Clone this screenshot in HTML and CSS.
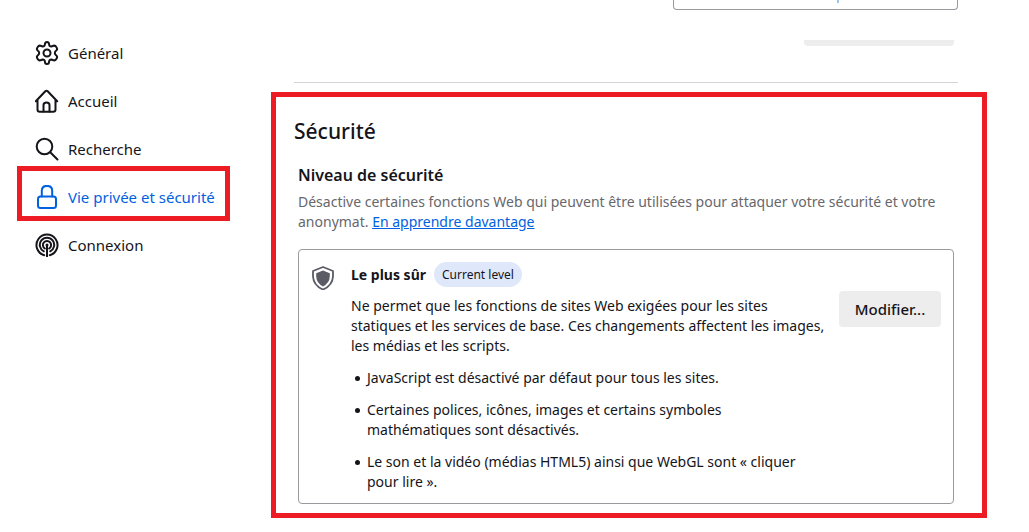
FILE: index.html
```html
<!DOCTYPE html>
<html lang="fr">
<head>
    <meta charset="UTF-8">
    <meta name="viewport" content="width=device-width, initial-scale=1.0">
    <title>Paramètres</title>
    <link rel="stylesheet" href="styles.css">
</head>
<body>

    <div class="page">
        <nav class="sidebar">
            <a class="category" href="#general">
                <svg class="icon" viewBox="0 0 24 24">
                    <path d="M9.900 3.500Q9.900 1 12 1Q14.100 1 14.100 3.500Q14.300 5.500 16.300 5.500L18.500 4.700Q20.300 4.300 21.300 6Q22.900 8.300 21.300 9.500Q19.800 10.600 19.800 12Q19.800 13.400 21.300 14.500Q22.900 15.700 21.300 18Q20.300 19.700 18.500 19.300L16.300 18.500Q14.300 18.500 14.100 20.500Q14.100 23 12 23Q9.900 23 9.900 20.500Q9.700 18.500 7.700 18.500L5.500 19.300Q3.700 19.700 2.700 18Q1.100 15.700 2.700 14.500Q4.200 13.400 4.200 12Q4.200 10.600 2.700 9.500Q1.100 8.300 2.700 6Q3.700 4.300 5.500 4.700L7.700 5.500Q9.700 5.500 9.900 3.500Z"/>
                    <circle cx="12" cy="12" r="3.500"/>
                </svg>
                <span>Général</span>
            </a>
            <a class="category" href="#accueil">
                <svg class="icon" viewBox="0 0 24 24">
                    <path d="M.8 12.300L10.300 2.300Q11.500 1.200 12.700 2.300L22.200 12.300M2.500 10.800V20.500Q2.500 22.800 4.800 22.800H18.200Q20.500 22.800 20.500 20.500V10.800"/>
                    <path d="M8.500 22.500V16Q8.500 13.500 11.500 13.500Q14.500 13.500 14.500 16V22.500"/>
                </svg>
                <span>Accueil</span>
            </a>
            <a class="category" href="#recherche">
                <svg class="icon" viewBox="0 0 24 24">
                    <circle cx="9.500" cy="9.500" r="7.800"/>
                    <path d="M15.200 15.200L22.500 22.500"/>
                </svg>
                <span>Recherche</span>
            </a>
            <a class="category selected" href="#vie-privee">
                <svg class="icon" viewBox="0 0 24 24">
                    <rect x="3" y="11.500" width="18" height="11.500" rx="2.500"/>
                    <path d="M6.800 11.500V5.800Q6.800 .9 12 .9Q17.200 .9 17.200 5.800V11.500"/>
                </svg>
                <span>Vie privée et sécurité</span>
            </a>
            <a class="category" href="#connexion">
                <svg class="icon" viewBox="0 0 24 24">
                    <path d="M9.200 22.200A10.500 10.500 0 1 1 14.800 22.200M8.800 18.300A7.200 7.200 0 1 1 15.200 18.300M9.800 15.500A4.100 4.100 0 1 1 14.200 15.500M12 13V23.500"/>
                    <circle class="filled" cx="12" cy="12" r="1.500"/>
                </svg>
                <span>Connexion</span>
            </a>
        </nav>

        <main class="content">
            <div class="previous">
                <div class="previous-box"><span class="previous-mark"></span></div>
                <div class="previous-button"></div>
            </div>

            <section class="security">
                <h1>Sécurité</h1>
                <h2>Niveau de sécurité</h2>
                <p class="description">Désactive certaines fonctions Web qui peuvent être utilisées pour attaquer votre sécurité et votre anonymat. <a href="#aide">En apprendre davantage</a></p>

                <div class="card">
                    <svg class="shield" viewBox="0 0 24 24">
                        <path d="M12 1L22 5V10.500Q21.500 19.500 12 23.500Q2.500 19.500 2 10.500V5Z" fill="none" stroke="#5b5b66" stroke-width="1.800" stroke-linejoin="round"/>
                        <path d="M12 4.500L18.800 7.200V10.500Q18.500 17 12 20.500Q5.500 17 5.200 10.500V7.200Z" fill="#5b5b66"/>
                    </svg>
                    <div class="level">
                        <div class="level-title">
                            <h3>Le plus sûr</h3>
                            <span class="badge">Current level</span>
                        </div>
                        <p>Ne permet que les fonctions de sites Web exigées pour les sites statiques et les services de base. Ces changements affectent les images, les médias et les scripts.</p>
                        <ul>
                            <li>JavaScript est désactivé par défaut pour tous les sites.</li>
                            <li>Certaines polices, icônes, images et certains symboles mathématiques sont désactivés.</li>
                            <li>Le son et la vidéo (médias HTML5) ainsi que WebGL sont «&nbsp;cliquer pour lire&nbsp;».</li>
                        </ul>
                    </div>
                    <button class="change" type="button">Modifier...</button>
                </div>
            </section>
        </main>
    </div>

</body>
</html>
```
FILE: styles.css
```css
* {
    box-sizing: border-box;
}
body {
    margin: 0;
    background: #fff;
    color: #15141a;
    font-family: "Noto Sans", "Open Sans", sans-serif;
    font-size: 14px;
    line-height: 20px;
}
h1, h2, h3, p, ul {
    margin: 0;
}
.page {
    display: flex;
}
.sidebar {
    width: 271px;
    flex-shrink: 0;
    padding: 29px 41px 0 17px;
}
.category {
    position: relative;
    display: flex;
    align-items: center;
    gap: 9px;
    height: 48px;
    padding-left: 18px;
    color: #15141a;
    font-size: 15px;
    text-decoration: none;
    white-space: nowrap;
}
.icon {
    width: 24px;
    height: 24px;
    flex-shrink: 0;
    fill: none;
    stroke: currentColor;
    stroke-width: 2;
    stroke-linecap: round;
    stroke-linejoin: round;
}
.filled {
    fill: currentColor;
    stroke: none;
}
.selected {
    color: #0061e0;
}
/* red frame around the selected category */
.selected::after {
    content: "";
    position: absolute;
    top: -7px;
    bottom: 0;
    left: 0;
    right: 0;
    border: 5px solid #ed1c24;
}
.content {
    flex: 1;
    padding-right: 42px;
}
.previous {
    display: flex;
    flex-direction: column;
    align-items: flex-end;
    height: 83px;
    margin: 0 29px 9px 23px;
    border-bottom: 1px solid #d5d5d7;
}
.previous-box {
    display: flex;
    justify-content: center;
    width: 285px;
    height: 10px;
    border: 1px solid #9a9a9e;
    border-top: 0;
    border-radius: 0 0 4px 4px;
}
.previous-mark {
    width: 2px;
    height: 3px;
    margin-left: 44px;
    background: #9bc5ec;
}
.previous-button {
    width: 150px;
    height: 6px;
    margin: 30px 4px 0 0;
    background: #ededed;
    border-radius: 0 0 4px 4px;
}
.security {
    border: 5px solid #ed1c24;
    padding: 20px 28px 9px 22px;
}
h1 {
    margin: 0 0 18px -4px;
    font-size: 21px;
    font-weight: 500;
    line-height: 28px;
}
h2 {
    margin-bottom: 5px;
    font-size: 16px;
    font-weight: 600;
    line-height: 24px;
}
.description {
    color: #67676c;
}
.description a {
    color: #0061e0;
}
.card {
    display: flex;
    align-items: flex-start;
    margin-top: 17px;
    padding: 12px 12px 11px;
    border: 1px solid #9a9a9e;
    border-radius: 4px;
}
.shield {
    width: 24px;
    height: 24px;
    flex-shrink: 0;
    margin: 4px 16px 0 0;
}
.level {
    flex: 1;
}
.level-title {
    display: flex;
    align-items: center;
    gap: 8px;
    margin-bottom: 9px;
}
h3 {
    font-size: 14px;
    font-weight: 700;
}
.badge {
    padding: 0 8px;
    border-radius: 13px;
    background: #dfe8fa;
    font-size: 12px;
    line-height: 25px;
}
ul {
    padding: 0;
    list-style: none;
}
li {
    position: relative;
    margin-top: 12px;
    padding-left: 16px;
}
li::before {
    content: "";
    position: absolute;
    top: 8px;
    left: 4px;
    width: 5px;
    height: 5px;
    border-radius: 50%;
    background: currentColor;
}
.change {
    width: 102px;
    height: 36px;
    flex-shrink: 0;
    margin: 29px 0 0 12px;
    padding: 0;
    border: 0;
    border-radius: 4px;
    background: #ededed;
    color: #15141a;
    font-family: inherit;
    font-size: 15px;
    font-weight: 500;
}
```
